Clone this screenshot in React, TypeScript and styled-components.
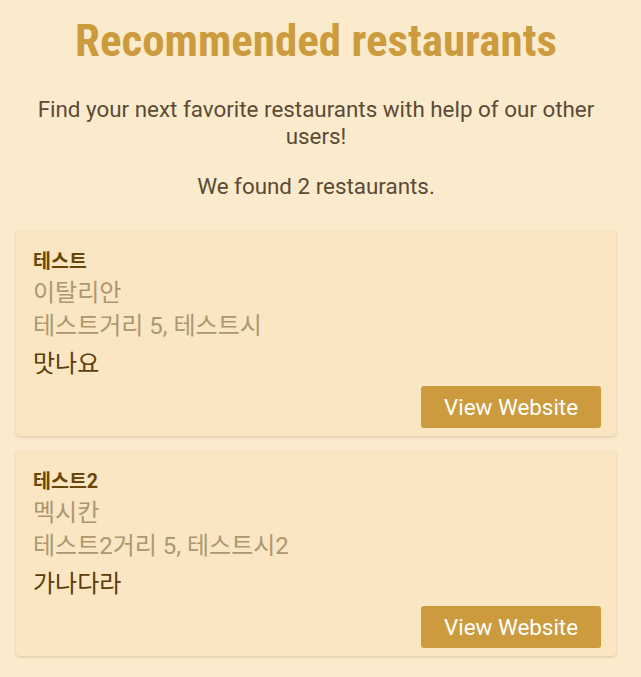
import React from "react";
import styled, { createGlobalStyle } from "styled-components";

const GlobalStyle = createGlobalStyle`
  html, body {
    margin: 0;
    background: #fbebcd;
  }
  body {
    font-family: Roboto, "Noto Sans CJK KR", sans-serif;
  }
`;

const Page = styled.main`
  padding: 14px 25px 20px 16px;
  display: flex;
  flex-direction: column;
  align-items: center;
`;

const Title = styled.h1`
  margin: 0;
  font-family: "Roboto Condensed", Roboto, sans-serif;
  font-stretch: condensed;
  font-size: 45px;
  font-weight: 700;
  line-height: 54px;
  color: #cc9b3d;
`;

const Lead = styled.p`
  margin: 28px 0 0;
  font-size: 22.4px;
  line-height: 27px;
  color: #5b4a35;
  text-align: center;
`;

const Count = styled(Lead)`
  margin-top: 23px;
`;

const List = styled.div`
  width: 100%;
  margin-top: 31px;
  display: flex;
  flex-direction: column;
  gap: 15px;
`;

const Card = styled.article`
  background: #fae6c3;
  border-radius: 4px;
  box-shadow: 0 1px 3px rgba(120, 90, 40, 0.25);
  padding: 16px 15px 8px 17px;
  display: flex;
  flex-direction: column;
`;

const Name = styled.h2`
  margin: 0;
  font-size: 19.5px;
  font-weight: 700;
  line-height: 30px;
  color: #6b4608;
  font-family: Roboto, "Noto Sans CJK KR", sans-serif;
`;

const Meta = styled.div`
  font-size: 24px;
  line-height: 33px;
  color: #ae9770;
  font-family: Roboto, "Noto Sans CJK KR", sans-serif;
`;

const Review = styled.p`
  margin: 4px 0 0;
  font-size: 24px;
  line-height: 34px;
  color: #5c3d08;
  font-family: Roboto, "Noto Sans CJK KR", sans-serif;
`;

const Actions = styled.div`
  display: flex;
  justify-content: flex-end;
  margin-top: 5px;
`;

const Button = styled.a`
  display: inline-flex;
  align-items: center;
  justify-content: center;
  height: 42px;
  width: 180px;
  background: #cc9b3d;
  color: #ffffff;
  border-radius: 3px;
  font-size: 22.4px;
  text-decoration: none;
  cursor: pointer;
`;

const restaurants = [
  {
    name: "테스트",
    cuisine: "이탈리안",
    address: "테스트거리 5, 테스트시",
    review: "맛나요",
  },
  {
    name: "테스트2",
    cuisine: "멕시칸",
    address: "테스트2거리 5, 테스트시2",
    review: "가나다라",
  },
];

export default function App() {
  return (
    <>
      <GlobalStyle />
      <Page>
        <Title>Recommended restaurants</Title>
        <Lead>Find your next favorite restaurants with help of our other users!</Lead>
        <Count>We found {restaurants.length} restaurants.</Count>
        <List>
          {restaurants.map((r) => (
            <Card key={r.name}>
              <Name>{r.name}</Name>
              <Meta>{r.cuisine}</Meta>
              <Meta>{r.address}</Meta>
              <Review>{r.review}</Review>
              <Actions>
                <Button>View Website</Button>
              </Actions>
            </Card>
          ))}
        </List>
      </Page>
    </>
  );
}
